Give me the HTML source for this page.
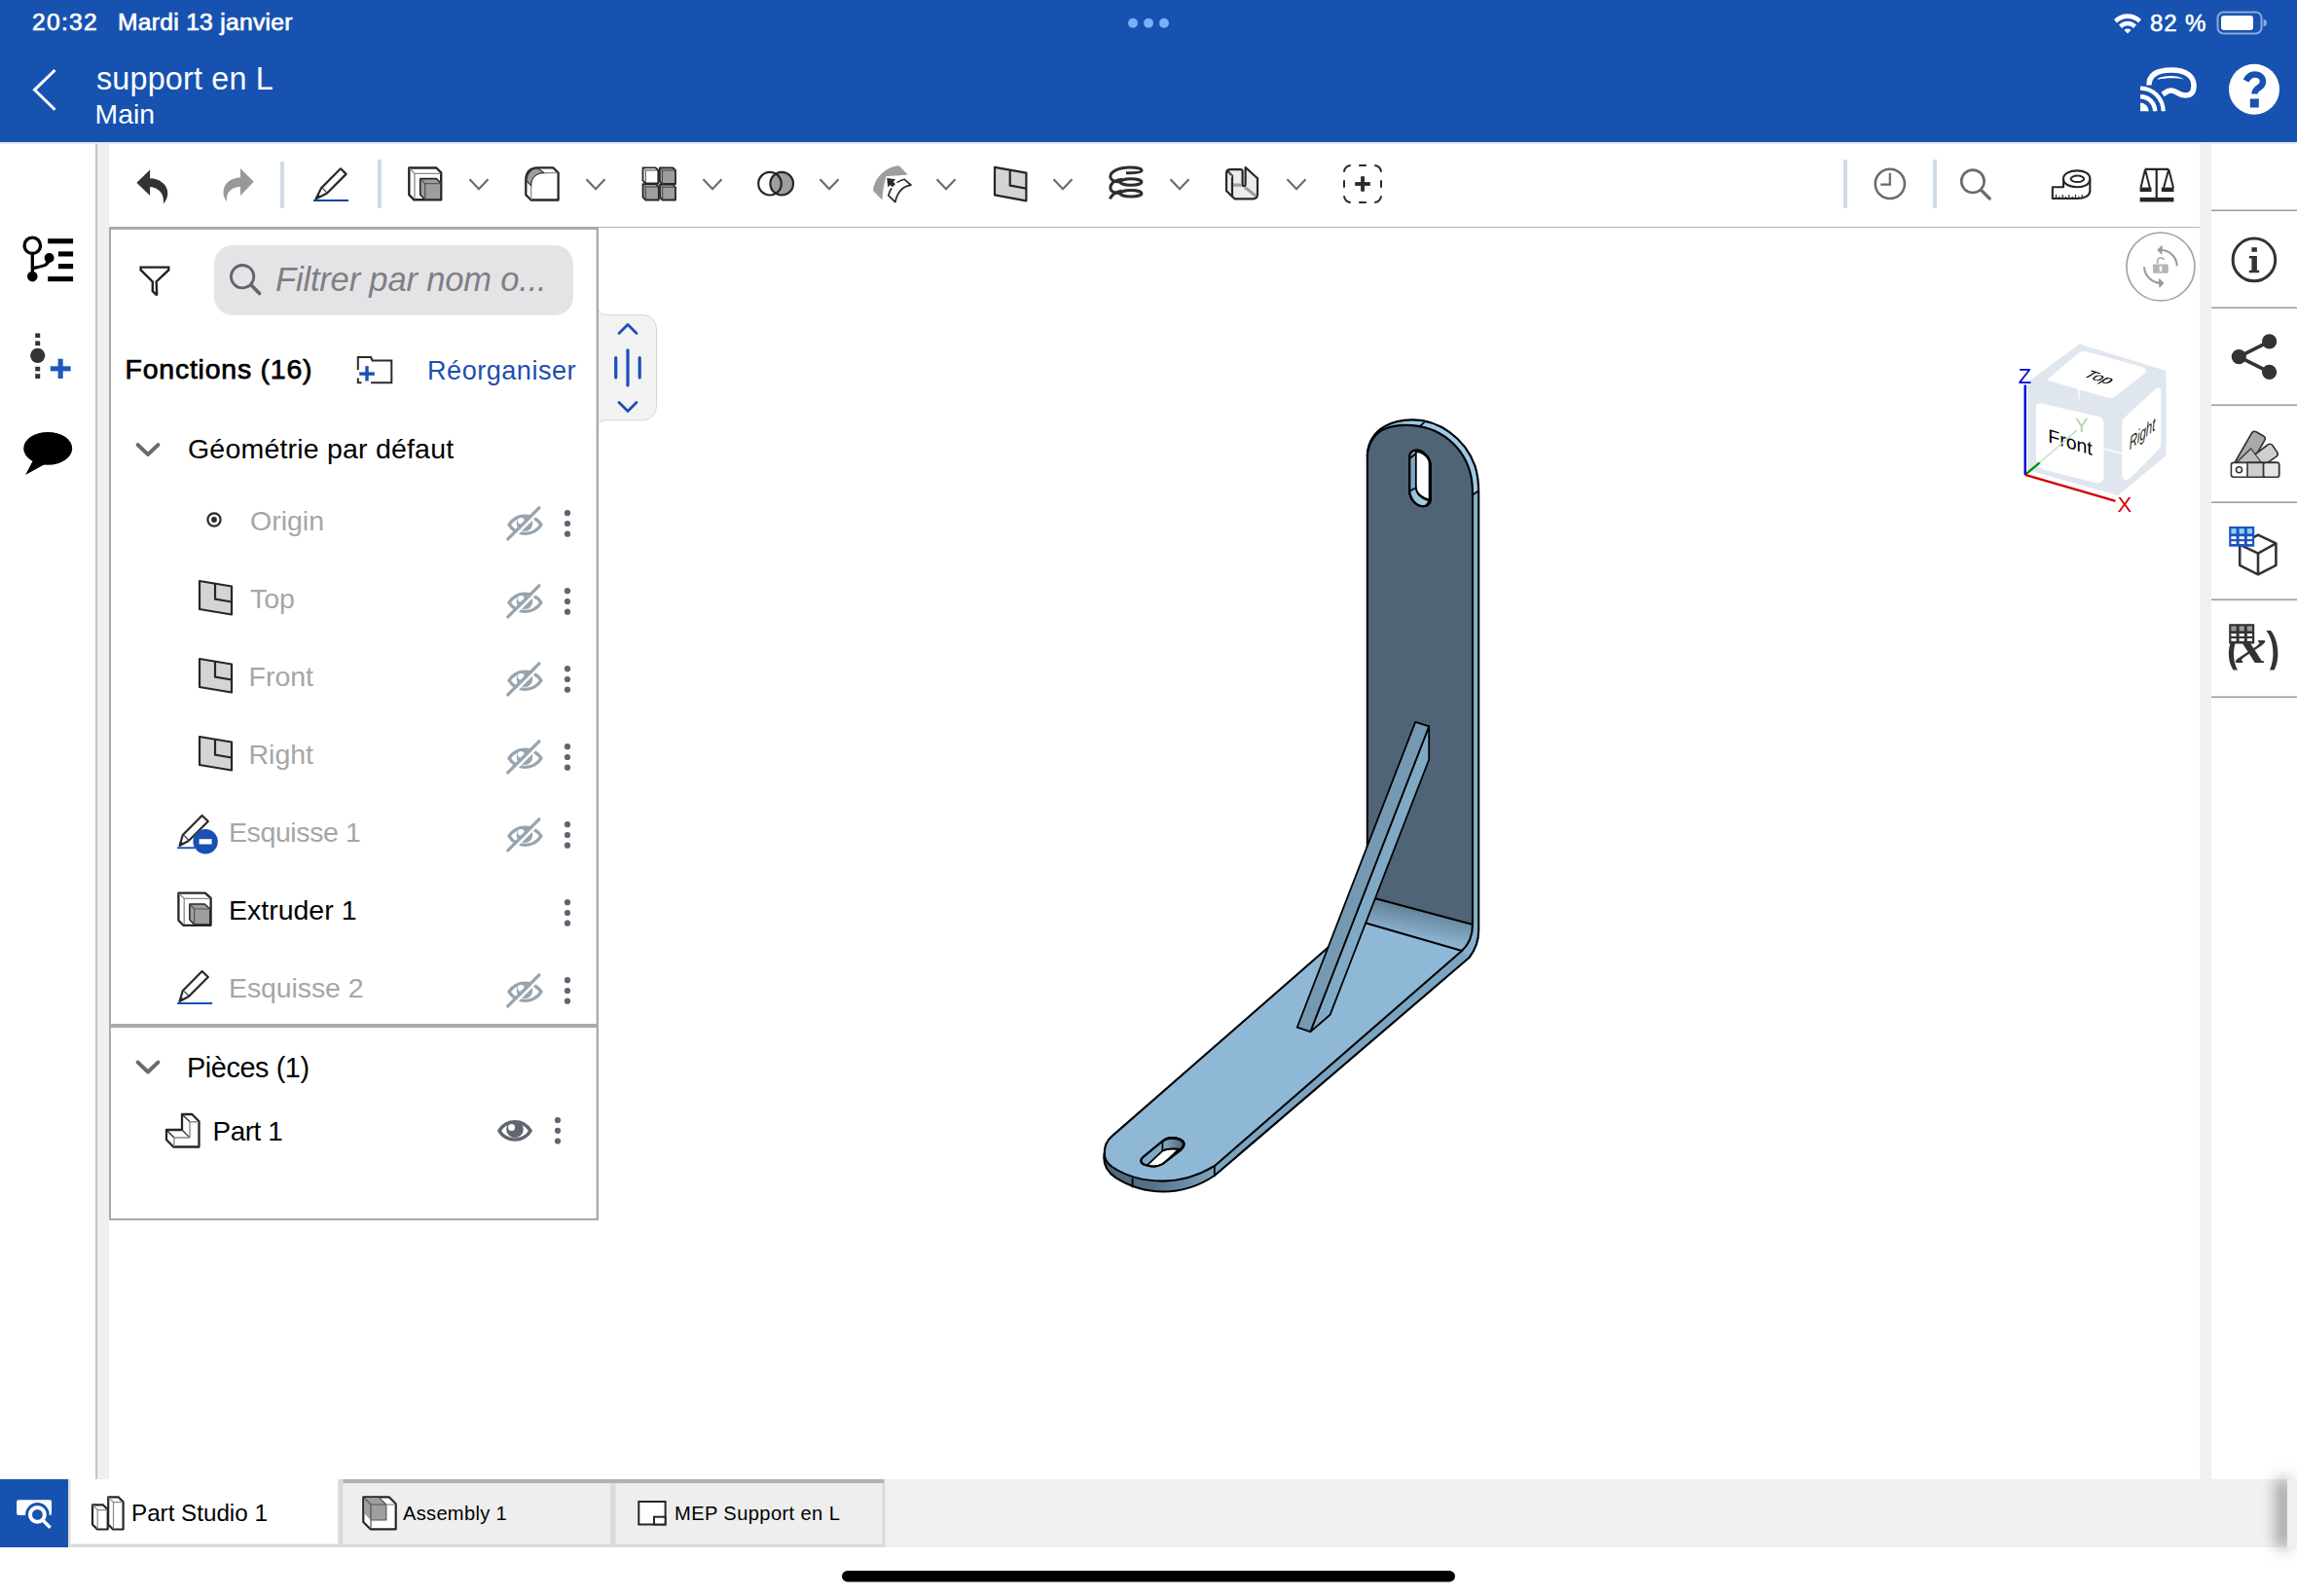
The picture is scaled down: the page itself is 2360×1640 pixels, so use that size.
<!DOCTYPE html>
<html><head><meta charset="utf-8">
<style>
*{margin:0;padding:0;box-sizing:border-box}
html,body{width:2360px;height:1640px;overflow:hidden;background:#fff;font-family:"Liberation Sans",sans-serif}
.a{position:absolute}
.t{position:absolute;white-space:nowrap;line-height:1}
svg.s{position:absolute;left:0;top:0;overflow:visible}
</style></head><body>
<!-- header -->
<div class="a" style="left:0;top:0;width:2360px;height:146px;background:#1752b0"></div>
<div class="a" style="left:0;top:146px;width:2360px;height:2px;background:#e4ebf4"></div>
<div class="t" style="left:33px;top:11.3px;font-size:24.6px;color:#fff;-webkit-text-stroke:0.7px #fff;letter-spacing:1.3px">20:32</div>
<div class="t" style="left:121px;top:11.3px;font-size:24.6px;color:#fff;-webkit-text-stroke:0.7px #fff;letter-spacing:0.3px">Mardi 13 janvier</div>
<div class="t" style="left:99px;top:65px;font-size:32.3px;color:#fff;letter-spacing:0.2px">support en L</div>
<div class="t" style="left:97.6px;top:102.8px;font-size:28.3px;color:#fff">Main</div>
<div class="t" style="left:2209px;top:12px;font-size:24px;color:#fff;-webkit-text-stroke:0.55px #fff;letter-spacing:0.9px">82 %</div>

<svg class="s" width="2360" height="150">
 <!-- dots -->
 <circle cx="1164" cy="23.8" r="5" fill="#7aaefc"/>
 <circle cx="1180" cy="23.8" r="5" fill="#7aaefc"/>
 <circle cx="1196" cy="23.8" r="5" fill="#7aaefc"/>
 <!-- back chevron -->
 <polyline points="56.5,72 35.5,92.3 56.5,112.8" fill="none" stroke="#fff" stroke-width="3"/>
 <!-- wifi -->
 <g fill="#fff" transform="translate(0,-1.5)">
  <path d="M2172,21.5 A20,20 0 0 1 2200,21.5 L2197,25 A15.5,15.5 0 0 0 2175,25 Z"/>
  <path d="M2177,27 A12.5,12.5 0 0 1 2195,27 L2192,30.5 A8,8 0 0 0 2180,30.5 Z"/>
  <path d="M2182.5,32.5 A5,5 0 0 1 2189.5,32.5 L2186,36 Z"/>
 </g>
 <!-- battery -->
 <rect x="2278.5" y="12.5" width="45" height="22" rx="6" fill="none" stroke="#8aa8dc" stroke-width="2"/>
 <rect x="2282" y="16" width="33" height="15" rx="3" fill="#fff"/>
 <path d="M2325.5,20 a3.5,3.5 0 0 1 0,7 Z" fill="#8aa8dc"/>
 <!-- cast/headset icon -->
 <g fill="#fff">
  <path d="M2199,105.6 A8.7,8.7 0 0 1 2207.7,114.3 L2199,114.3 Z"/>
  <path d="M2199,96.9 A17.4,17.4 0 0 1 2216.4,114.3 L2211.9,114.3 A12.9,12.9 0 0 0 2199,101.4 Z"/>
  <path d="M2199,88.5 A25.8,25.8 0 0 1 2224.8,114.3 L2220.6,114.3 A21.6,21.6 0 0 0 2199,92.7 Z"/>
 </g>
 <path d="M2208,87.5 C2208,76 2218,72 2231,72 C2247,72 2254,79 2254,88 C2254,96 2250,98 2245,98 C2238,98 2236,93 2231,93 C2227,93 2225,95 2222,97" fill="none" stroke="#fff" stroke-width="5.5"/>
 <path d="M2217,80.5 C2224,77 2238,77 2244,81.5 C2238,79.8 2224,79.8 2217,81.8 Z" fill="#fff"/>
 <!-- help -->
 <circle cx="2316" cy="91.7" r="26" fill="#fff"/>
 <path d="M2307.5,83 C2310,78.5 2313.5,76.5 2316.5,76.5 C2322,76.5 2325,80 2325,84 C2325,88 2321.5,89.5 2319.5,91 C2317.5,92.5 2316.5,94 2316.5,96.5" fill="none" stroke="#1752b0" stroke-width="6.5"/>
 <rect x="2311.8" y="101.5" width="9" height="9" fill="#1752b0"/>
</svg>


<!-- toolbar -->
<svg class="s" width="2360" height="240">
 <defs>
  <g id="chev"><polyline points="-9.5,-5 0,5 9.5,-5" fill="none" stroke="#6d6d70" stroke-width="2.3"/></g>
 </defs>
 <!-- undo -->
 <path d="M140.4,187.7 L154.1,174.6 L154.1,183.2 C164,183.5 172.3,189.5 172.3,198.5 C172.3,203 170.2,206.8 167.8,209.4 C169,203 166.5,193.5 154.1,192 L154.1,200.9 Z" fill="#333"/>
 <!-- redo -->
 <path d="M260.8,186.8 L247,173 L247,182.3 C237,182.8 229.5,189 229.5,197.5 C229.5,201.5 231,205 233,207.3 C232,200.5 235,192.5 247,191.7 L247,200.9 Z" fill="#999"/>
 <!-- separators -->
 <rect x="288" y="166" width="4" height="48" fill="#cfdbe6"/>
 <rect x="388" y="164" width="4" height="50" fill="#cfdbe6"/>
 <rect x="1894" y="164" width="4" height="50" fill="#cfdbe6"/>
 <rect x="1986" y="164" width="4" height="50" fill="#cfdbe6"/>
 <!-- pencil -->
 <path d="M350,173.3 L355.6,178.9 L335.8,198.7 L330.2,193.1 Z" fill="#fff" stroke="#2a2a2a" stroke-width="2.2" stroke-linejoin="round"/>
 <path d="M330.2,193.1 L324.6,204.3 L335.8,198.7" fill="#fff" stroke="#2a2a2a" stroke-width="2.2" stroke-linejoin="round"/>
 <path d="M324.6,204.3 L326.5,199 L329.8,202.4 Z" fill="#2a2a2a"/>
 <rect x="322" y="205" width="36" height="2" fill="#0b3fb0"/>
 <!-- extrude -->
 <path d="M420.3,172.5 L448.4,172.5 L453.2,177.3 L453.2,205.3 L425.4,205.3 L420.3,200.2 Z" fill="#fff" stroke="#262626" stroke-width="2.4" stroke-linejoin="round"/>
 <path d="M421,173.2 L426,178.3 M426,178.3 L452.5,178.3 M426,178.3 L426,204.5" fill="none" stroke="#8a8a8a" stroke-width="1.3"/>
 <path d="M431.7,183.6 L448.4,183.6 L453,188.2 L453,205 L436.7,205 L431.7,200 Z" fill="#9e9e9e" stroke="#262626" stroke-width="1.6" stroke-linejoin="round"/>
 <path d="M431.7,183.6 L436.7,188.6 L453,188.6 M436.7,188.6 L436.7,205" fill="none" stroke="#555" stroke-width="1.3"/>
 <use href="#chev" x="492" y="189.2"/>
 <!-- fillet -->
 <path d="M540.3,199.2 L540.3,185 C540.3,177 545,172.3 552,172.3 L568.3,172.3 L573.6,177.6 L573.6,205.5 L545.6,205.5 L540.3,200.2 Z" fill="#fff" stroke="#262626" stroke-width="2.3" stroke-linejoin="round"/>
 <path d="M541,186 C541,178 546,173 553,173 L559,177.6 C550,178 545.7,183.5 545.7,190.7 Z" fill="#9e9e9e" stroke="#333" stroke-width="1.2"/>
 <path d="M559.4,177.6 L573,177.6 M545.7,190.7 L545.7,205" fill="none" stroke="#8a8a8a" stroke-width="1.3"/>
 <use href="#chev" x="612" y="189.2"/>
 <!-- pattern -->
 <g stroke="#262626" stroke-width="1.8" stroke-linejoin="round">
  <path d="M660.5,172.3 L673.5,172.3 L676.3,175 L676.3,188.5 L663.3,188.5 L660.5,185.7 Z" fill="#fff"/>
  <path d="M677.8,172.3 L691.3,172.3 L694,175 L694,189 L680.5,189 L677.8,186.3 Z" fill="#9e9e9e"/>
  <path d="M660.5,189.2 L674,189.2 L676.8,192 L676.8,205.5 L663.3,205.5 L660.5,202.7 Z" fill="#9e9e9e"/>
  <path d="M678,189.5 L691.3,189.5 L694,192.3 L694,205.5 L680.7,205.5 L678,202.8 Z" fill="#9e9e9e"/>
 </g>
 <path d="M660.5,172.3 L663.3,175 L676.3,175 M663.3,175 L663.3,188.5 M677.8,172.3 L680.5,175 L694,175 M680.5,175 L680.5,189 M660.5,189.2 L663.3,192 L676.8,192 M663.3,192 L663.3,205.5 M678,189.5 L680.7,192.3 L694,192.3 M680.7,192.3 L680.7,205.5" fill="none" stroke="#444" stroke-width="1"/>
 <use href="#chev" x="732" y="189.2"/>
 <!-- boolean -->
 <circle cx="803.2" cy="188.7" r="11.8" fill="#9e9e9e" stroke="#262626" stroke-width="2.2"/>
 <circle cx="791" cy="188.7" r="11.8" fill="none" stroke="#262626" stroke-width="2.2"/>
 <use href="#chev" x="852" y="189.2"/>
 <!-- sweep -->
 <path d="M897,196 C898,183 910,171 923.7,170.2 L932.7,179.6 C925,180 917,181 910.4,181.2 C908,189 907,197 906.5,205.5 Z" fill="#9e9e9e"/>
 <path d="M911.2,183.1 L920.2,184.3 L912.3,192.4 Z" fill="#2a2a2a"/><path d="M915.5,187.8 L921.6,193.6" stroke="#2a2a2a" stroke-width="4.4"/>
 <path d="M921.5,187.6 C924,186 926.5,185 929.2,184.3 L936,190.2 C928,191.5 922,197 919.8,207.6 L912.8,200.8 C913.5,198 914.5,195.5 916,193.2" fill="#fff" stroke="#2a2a2a" stroke-width="1.7" stroke-linejoin="round"/>
 <use href="#chev" x="972" y="189.2"/>
 <!-- plane -->
 <path d="M1022,171.8 L1054.4,177.6 L1054.4,206.3 L1022,200.4 Z" fill="#d4d4d4" stroke="#262626" stroke-width="2.2" stroke-linejoin="round"/>
 <path d="M1037.7,174.6 L1037.7,190.6 L1054.2,193.6" fill="none" stroke="#262626" stroke-width="2.2"/>
 <use href="#chev" x="1092" y="189.2"/>
 <!-- helix -->
 <g fill="none" stroke="#2e2e2e" stroke-width="3">
  <path d="M1157,177.8 C1165,177.8 1173,177.4 1173,175.3 C1173,173 1167,172 1161,172 C1149,172 1140.8,176.5 1140.8,181.5 C1140.8,185 1145,186.8 1151,187"/>
  <ellipse cx="1162" cy="187" rx="11" ry="3.2"/>
  <path d="M1153,184.2 C1145.5,184.8 1140.8,188.5 1140.8,193 C1140.8,196.5 1145,198.5 1151,198.8"/>
  <ellipse cx="1162" cy="198.8" rx="11" ry="3.2"/>
  <path d="M1152.5,196 C1147,197 1142.5,200 1140.2,204.3"/>
 </g>
 <use href="#chev" x="1212" y="189.2"/>
 <!-- sheet metal -->
 <path d="M1260,178.2 C1260,175.5 1262,174.2 1264.5,174.2 L1274.5,174.2 C1276,174.2 1276.6,175 1276.6,176.2 L1276.6,189.3 C1276.6,190.5 1277.3,191.2 1278,191.2 C1278.8,191.2 1279.6,190.5 1279.6,189.3 L1279.6,172 L1292,183.2 L1292,199.8 C1292,202.5 1290,204.3 1287,204.3 L1268.8,204.3 L1266,202 L1260,196 Z" fill="#ececec" stroke="#262626" stroke-width="2.2" stroke-linejoin="round"/>
 <path d="M1261,175.5 L1266,180.8 L1266,202" fill="none" stroke="#262626" stroke-width="2.2"/>
 <path d="M1267,190.2 L1276,190.2 M1279,192.5 L1290.5,201.5" fill="none" stroke="#9e9e9e" stroke-width="3.2"/>
 <path d="M1261.5,176 L1266,180.5 L1266,183" fill="#9e9e9e"/>
 <use href="#chev" x="1332" y="189.2"/>
 <!-- dashed plus -->
 <path d="M1381,176.8 A6.8,6.8 0 0 1 1387.8,170 M1412.2,170 A6.8,6.8 0 0 1 1419,176.8 M1419,201.2 A6.8,6.8 0 0 1 1412.2,208 M1387.8,208 A6.8,6.8 0 0 1 1381,201.2 M1396.2,170 H1403.8 M1396.2,208 H1403.8 M1381,185.2 V192.8 M1419,185.2 V192.8" fill="none" stroke="#2a2a2a" stroke-width="2"/>
 <rect x="1392.2" y="187.1" width="15.6" height="3.8" fill="#2a2a2a"/>
 <rect x="1398.1" y="181.2" width="3.8" height="15.5" fill="#2a2a2a"/>
 <!-- clock -->
 <circle cx="1941.8" cy="188.9" r="15.1" fill="none" stroke="#69696e" stroke-width="2.5"/>
 <path d="M1941.8,177.8 L1941.8,189.7 L1932.2,189.7" fill="none" stroke="#69696e" stroke-width="2.2"/>
 <!-- search -->
 <circle cx="2026.9" cy="186.3" r="11.7" fill="none" stroke="#69696e" stroke-width="2.6"/>
 <path d="M2035.5,195.3 L2044.2,204" fill="none" stroke="#69696e" stroke-width="3.2" stroke-linecap="round"/>
 <!-- tape measure -->
 <path d="M2108.8,192.3 L2120,192.3 L2120,183.5 C2120,178.5 2126,175.4 2134.2,175.4 C2142,175.4 2147.3,178.5 2147.3,183.5 L2147.3,196 C2147.3,201 2142,204 2134.2,204 L2108.8,204 Z" fill="#fff" stroke="#262626" stroke-width="2.1" stroke-linejoin="round"/>
 <path d="M2120,184 C2120,189 2126,192.3 2134.2,192.3 C2142,192.3 2147.3,189 2147.3,184" fill="none" stroke="#262626" stroke-width="2.1"/>
 <ellipse cx="2134.4" cy="183.8" rx="6.8" ry="3.2" fill="none" stroke="#262626" stroke-width="2"/>
 <path d="M2112.5,204 v-4 M2115.8,204 v-2.2 M2119.2,204 v-4 M2122.5,204 v-2.2 M2125.8,204 v-4 M2129.2,204 v-2.2 M2132.5,204 v-4 M2135.8,204 v-2.2 M2139.2,204 v-4" stroke="#262626" stroke-width="1.2"/>
 <!-- scale -->
 <path d="M2203.8,173.8 L2228.2,173.8 M2215.7,173.8 L2215.7,204" fill="none" stroke="#262626" stroke-width="2.2"/>
 <path d="M2204,174 L2199.5,193 M2204,174 L2208.8,193 M2228.2,174 L2223,193 M2228.2,174 L2233,193" fill="none" stroke="#262626" stroke-width="2"/>
 <rect x="2198.6" y="192.6" width="11.9" height="4.5" fill="#262626"/>
 <rect x="2220.8" y="192.6" width="12.6" height="4.5" fill="#262626"/>
 <rect x="2198.6" y="202.9" width="34.8" height="4.5" fill="#262626"/>
</svg>


<!-- 3D model -->
<svg class="s" width="2360" height="1640">
 <defs>
  <linearGradient id="bend" x1="0.7" y1="0" x2="0.38" y2="0.92">
   <stop offset="0" stop-color="#4f6577"/><stop offset="0.45" stop-color="#7092aa"/><stop offset="0.85" stop-color="#8db6d4"/><stop offset="1" stop-color="#8fb8d6"/>
  </linearGradient>
  <linearGradient id="endside" x1="1133" y1="0" x2="1250" y2="0" gradientUnits="userSpaceOnUse">
   <stop offset="0" stop-color="#4f6577"/><stop offset="0.45" stop-color="#58728a"/><stop offset="1" stop-color="#7ea6c3"/>
  </linearGradient>
  <linearGradient id="slotback" x1="1193" y1="0" x2="1216" y2="0" gradientUnits="userSpaceOnUse">
   <stop offset="0" stop-color="#8ab3d0"/><stop offset="1" stop-color="#4f6577"/>
  </linearGradient>
  <linearGradient id="slotwall" x1="0" y1="0" x2="1" y2="1">
   <stop offset="0" stop-color="#8fbad8"/><stop offset="1" stop-color="#a5d2f0"/>
  </linearGradient>
 </defs>
 <!-- fills -->
 <path d="M1502,977 L1509.5,984 L1247.8,1208 L1247.8,1198.2 Z" fill="#7aa5c2" stroke="#7aa5c2" stroke-width="1.5"/>
 <path d="M1134.7,1185.4 C1133,1195 1136,1203 1146.3,1210.2 C1160,1219 1177,1224.5 1195.2,1224.5 C1215,1224.5 1233,1218 1247.8,1208 L1247.8,1198.2 C1233,1207 1215,1213.6 1195.2,1213.6 C1175,1213.6 1156,1208 1142.6,1199 C1137,1195 1134.7,1190 1134.7,1185.4 Z" fill="url(#endside)"/>
 <path d="M1403.2,948.5 L1502,977 L1247.8,1198.2 C1233,1207 1215,1213.6 1195.2,1213.6 C1175,1213.6 1156,1208 1142.6,1199 C1137,1195 1134.7,1190 1134.7,1185.4 C1134.7,1178 1137,1172 1142.6,1167.4 L1364.9,973.3 Z" fill="#8fb8d6"/>
 <path d="M1404.8,921 L1404.8,468.2 C1405,455 1412,444 1423,438 C1431,433.5 1440,431.4 1450.6,431.4 C1478,431 1505,450 1515.4,478.6 C1518.5,488 1519.2,497 1519.2,506 L1519.2,956 C1519.2,968 1515,977 1509.5,984 L1502,977 Z" fill="#84b0cd"/>
 <path d="M1440,433 C1444,432 1447,431.4 1450.6,431.4 C1478,431 1505,450 1515.4,478.6 C1518.5,488 1519.2,497 1519.2,506 L1513,508 C1513,470 1485,438 1445,437 Z" fill="#9ccae8"/>
 <path d="M1404.8,921.1 L1404.8,468.2 C1405,455 1415,443 1423.1,440.7 C1430,437.5 1438,436.9 1445.1,436.9 C1480,437 1505,460 1511.3,488.9 C1512.6,495 1513,502 1513,508.2 L1513,950 Z" fill="#4f6577"/>
 <path d="M1404.8,921.1 L1513,950 C1513,962 1508.5,971 1502,977 L1403.2,948.5 Z" fill="url(#bend)"/>
 <g stroke="#000" stroke-width="2.1" stroke-linejoin="round" stroke-linecap="round" fill="none">
  <!-- outer silhouette -->
  <path d="M1404.8,921 L1404.8,468.2 C1405,455 1412,444 1423,438 C1431,433.5 1440,431.4 1450.6,431.4 C1478,431 1505,450 1515.4,478.6 C1518.5,488 1519.2,497 1519.2,506 L1519.2,956 C1519.2,968 1515,977 1509.5,984 L1247.8,1208 C1233,1218 1215,1224.5 1195.2,1224.5 C1177,1224.5 1160,1219 1146.3,1210.2 C1136,1203 1133,1195 1134.7,1185.4 C1134.7,1178 1137,1172 1142.6,1167.4 L1370,968.8"/>
  <!-- dark face outline & bend lines -->
  <path d="M1404.8,468.2 C1405,455 1415,443 1423.1,440.7 C1430,437.5 1438,436.9 1445.1,436.9 C1480,437 1505,460 1511.3,488.9 C1512.6,495 1513,502 1513,508.2 L1513,950 C1513,962 1508.5,971 1502,977"/>
  <path d="M1404.8,921.1 L1513,950 M1403.2,948.5 L1502,977 L1247.8,1198.2 C1233,1207 1215,1213.6 1195.2,1213.6 C1175,1213.6 1156,1208 1142.6,1199 C1137,1195 1134.7,1190 1134.7,1185.4"/>
  <path d="M1459,437.6 L1463,434.4 M1513.5,508.2 L1518.8,504.6 M1163.6,1211.5 L1163.6,1219.5 M1247.8,1198.2 L1247.8,1208" stroke-width="1.8"/>
 </g>
 <g stroke="#000" stroke-width="2" stroke-linejoin="round">
  <!-- slot vertical plate -->
  <path d="M1448.2,468.2 C1449,464 1452,462.4 1455.5,462.4 C1462,462.4 1469.9,470 1469.9,479 L1469.9,513 C1469.9,518 1466,520.3 1462.4,520.3 C1456,520.3 1448.2,514 1448.2,505 Z" fill="#7fa9c6"/>
  <path d="M1454.8,464.1 C1462,464.5 1468.6,470 1468.6,477 L1468.6,513.7 C1462,512 1454.8,507 1454.8,501.3 Z" fill="#fff" stroke-width="1.8"/>
  <path d="M1448.2,504.8 L1454.8,501.3 C1455.5,508 1461,512.5 1468.3,514.5 C1466.5,518.5 1464.5,520 1462.4,520.2 C1455,519.5 1449.5,513.5 1448.2,504.8 Z" fill="url(#slotwall)" stroke-width="1.8"/>
  <path d="M1448.2,468.2 C1449,464 1452,462.4 1455.5,462.4 C1462,462.4 1469.9,470 1469.9,479 L1469.9,513 C1469.9,518 1466,520.3 1462.4,520.3 C1456,520.3 1448.2,514 1448.2,505 Z" fill="none"/>
  <path d="M1448.5,471 L1454.8,466" fill="none" stroke-width="1.6"/>
  <!-- slot bottom plate -->
  <path d="M1174.1,1189.2 L1192.9,1173.8 C1196,1170.5 1200,1168.9 1204.2,1168.9 C1211,1168.9 1216.6,1172 1216.6,1175.6 C1216.6,1178 1215,1180 1213.2,1181.7 L1194.4,1196 C1191,1198 1188,1198.6 1185.4,1198.6 C1178,1198.6 1172.3,1196 1172.3,1192.9 C1172.3,1191.5 1173,1190.2 1174.1,1189.2 Z" fill="#7fa9c6"/>
  <path d="M1194.4,1173.3 C1197,1171 1200,1169.8 1204.2,1169.8 C1211,1169.8 1215.8,1172.5 1215.8,1175.8 C1215.8,1177.5 1214.5,1179.3 1213,1180.8 C1211,1180.5 1208,1180.4 1205,1180.5 C1200,1180.7 1196.5,1181.5 1194.4,1182.6 Z" fill="url(#slotback)" stroke-width="1.8"/>
  <path d="M1178.6,1197.4 L1194.4,1182.6 C1198,1181 1205,1180.3 1210.8,1181.2 L1195.2,1195.8 C1190,1198.5 1183,1199 1178.6,1197.4 Z" fill="#fff" stroke-width="1.8"/>
  <path d="M1174.1,1189.2 L1192.9,1173.8 C1196,1170.5 1200,1168.9 1204.2,1168.9 C1211,1168.9 1216.6,1172 1216.6,1175.6 C1216.6,1178 1215,1180 1213.2,1181.7 L1194.4,1196 C1191,1198 1188,1198.6 1185.4,1198.6 C1178,1198.6 1172.3,1196 1172.3,1192.9 C1172.3,1191.5 1173,1190.2 1174.1,1189.2 Z" fill="none"/>
  <!-- rib -->
  <path d="M1468.2,746.3 L1468.2,780.5 L1366.6,1042.7 L1346.3,1060.2 Z" fill="#80a9c6" stroke-width="1.8"/>
  <path d="M1454.2,741.9 L1468.2,746.3 L1346.3,1060.2 L1332.7,1055.7 Z" fill="#7699b3" stroke-width="1.8"/>
 </g>
</svg>
<!-- right panel & viewcube -->
<svg class="s" width="2360" height="1640">
 <!-- right panel separators -->
 <rect x="2272" y="215.5" width="88" height="1.5" fill="#9a9a9a"/>
 <rect x="2272" y="315.5" width="88" height="1.5" fill="#9a9a9a"/>
 <rect x="2272" y="415.5" width="88" height="1.5" fill="#9a9a9a"/>
 <rect x="2272" y="515.5" width="88" height="1.5" fill="#9a9a9a"/>
 <rect x="2272" y="615.5" width="88" height="1.5" fill="#9a9a9a"/>
 <rect x="2272" y="715.5" width="88" height="1.5" fill="#9a9a9a"/>
 <!-- info -->
 <circle cx="2315.9" cy="266.9" r="21.8" fill="none" stroke="#333" stroke-width="3"/>
 <rect x="2313.4" y="254.2" width="5.5" height="4.6" fill="#333"/>
 <path d="M2310.8,263 L2318.9,263 L2318.9,277.7 L2321.2,277.7 L2321.2,280.3 L2310.8,280.3 L2310.8,277.7 L2313.4,277.7 L2313.4,265.6 L2310.8,265.6 Z" fill="#333"/>
 <!-- share -->
 <path d="M2300.3,366.6 L2331.6,350.9 M2300.3,366.6 L2331.6,382.3" stroke="#333" stroke-width="3.6"/>
 <circle cx="2300.3" cy="366.6" r="7.6" fill="#333"/>
 <circle cx="2331.6" cy="350.9" r="7.6" fill="#333"/>
 <circle cx="2331.6" cy="382.3" r="7.6" fill="#333"/>
 <!-- appearance -->
 <g stroke="#333" stroke-width="1.6" stroke-linejoin="round">
  <path d="M2296.5,474.5 L2313.5,445 C2314.5,443.3 2316.3,442.8 2318,443.8 L2325.5,448 C2327.2,449 2327.7,450.8 2326.7,452.5 L2312,478 Z" fill="#a9a9a9"/>
  <path d="M2305,476 L2330,457 C2331.5,455.8 2333.5,456 2334.7,457.5 L2339.5,464.5 C2340.6,466 2340.3,468 2338.8,469.2 L2322,481 Z" fill="#cfcfcf"/>
  <path d="M2298,475 L2312.7,461 L2321,472 L2325,477 Z" fill="#bdbdbd" stroke-width="1.2"/>
  <rect x="2292.4" y="475.4" width="49.2" height="14.8" rx="2.5" fill="#fff"/>
  <rect x="2309" y="475.4" width="16.6" height="14.8" fill="#cfcfcf"/>
  <rect x="2325.6" y="475.4" width="16" height="14.8" rx="2" fill="#e6e6e6"/>
  <circle cx="2300.5" cy="482.8" r="3" fill="none"/>
 </g>
 <!-- variable studio -->
 <path d="M2320,549.6 L2338.4,558.4 L2338.4,580.8 L2320,590.3 L2301.2,580.8 L2301.2,559.6 Z M2301.2,559.6 L2320,568.6 L2338.4,558.4 M2320,568.6 L2320,590" fill="#fff" stroke="#333" stroke-width="2.6" stroke-linejoin="round"/>
 <rect x="2290.2" y="541" width="26" height="20.7" fill="#1b55c0"/>
 <g fill="#8fd0f4"><rect x="2292.4" y="543.2" width="5.2" height="5.2"/><rect x="2300.6" y="543.2" width="5.2" height="5.2"/><rect x="2308.8" y="543.2" width="5.2" height="5.2"/></g>
 <g fill="#fff"><rect x="2292.4" y="551.2" width="5.2" height="2.8"/><rect x="2300.6" y="551.2" width="5.2" height="2.8"/><rect x="2308.8" y="551.2" width="5.2" height="2.8"/><rect x="2292.4" y="556.2" width="5.2" height="2.8"/><rect x="2300.6" y="556.2" width="5.2" height="2.8"/><rect x="2308.8" y="556.2" width="5.2" height="2.8"/></g>
 <!-- fx -->
 <path d="M2291.5,661 C2288.5,670 2289.5,681 2294.5,688.5 L2299,688.5 C2294.5,680 2294,670 2296.5,661 Z" fill="#333"/>
 <path d="M2333,648 C2341,657 2343,678 2336.5,688.5 L2332,688.5 C2337.5,677 2336.5,658 2328.5,648 Z" fill="#333"/>
 <text x="2297.5" y="681" font-family="Liberation Serif" font-style="italic" font-weight="bold" font-size="50" fill="#333" transform="translate(2297.5,681) scale(1.25,1) translate(-2297.5,-681)">x</text>
 <rect x="2290.2" y="641.2" width="26" height="20.3" fill="#333"/>
 <g fill="#9a9a9a"><rect x="2292.4" y="643.4" width="5.2" height="5"/><rect x="2300.6" y="643.4" width="5.2" height="5"/><rect x="2308.8" y="643.4" width="5.2" height="5"/></g>
 <g fill="#fff"><rect x="2292.4" y="651" width="5.2" height="2.8"/><rect x="2300.6" y="651" width="5.2" height="2.8"/><rect x="2308.8" y="651" width="5.2" height="2.8"/><rect x="2292.4" y="656" width="5.2" height="2.8"/><rect x="2300.6" y="656" width="5.2" height="2.8"/><rect x="2308.8" y="656" width="5.2" height="2.8"/></g>

 <!-- rotation lock -->
 <circle cx="2219.9" cy="274" r="35" fill="#fff" stroke="#a3a3a3" stroke-width="1.7"/>
 <path d="M2236.8,273.4 C2236.5,264 2229,257 2219.5,256.8" fill="none" stroke="#999" stroke-width="2.1"/>
 <path d="M2216.8,256.8 L2221.2,252.6 L2220.8,261.2 Z" fill="#999" stroke="#999" stroke-width="1" stroke-linejoin="round"/>
 <path d="M2203,274.3 C2203.3,283.5 2211,290.5 2220.5,291" fill="none" stroke="#999" stroke-width="2.1"/>
 <path d="M2222.8,290.9 L2218.6,286.6 L2218.8,295.2 Z" fill="#999" stroke="#999" stroke-width="1" stroke-linejoin="round"/>
 <rect x="2212" y="271.5" width="15.8" height="9.3" rx="1" fill="#b5b5b5"/>
 <path d="M2216.7,271 L2216.7,268.5 C2216.7,266 2218,264.8 2220,264.8 C2221.8,264.8 2223,265.7 2223.5,267.2" fill="none" stroke="#b5b5b5" stroke-width="1.8"/>
 <circle cx="2219.9" cy="275" r="1.7" fill="#fff"/><path d="M2219.1,275.5 L2220.7,275.5 L2221.2,279 L2218.6,279 Z" fill="#fff"/>

 <!-- view cube -->
 <path d="M2083,393 L2136.5,353.5 L2225.5,381 L2225.5,468 L2176,509 L2083,483 Z" fill="#dfe6ee"/>
 <path d="M2104.5,389 L2134,364 C2137,361 2140,360 2143,361 L2201,377 C2205,378.5 2206,381 2203,384 L2175,406 C2172,408.5 2169,409.5 2165,408.5 L2109,392.5 C2105,391.5 2103,390.5 2104.5,389 Z" fill="#fff"/>
 <path d="M2092,419 C2092,415 2094,413.8 2098,414.8 L2155,427.7 C2159.5,429 2161.5,431.5 2161.5,436 L2161.5,490.4 C2161.5,494.5 2157,497 2152.7,496 L2101.4,482.9 C2096,481.5 2092,478 2092,471.6 Z" fill="#fff"/>
 <path d="M2180.3,437 C2180.3,432 2182,429.5 2185,427 L2214,400 C2218,397 2220.4,398.5 2220.4,403 L2220.4,455 C2220.4,459 2219,461 2216,464 L2189,491 C2184,495 2180.3,493 2180.3,488 Z" fill="#fff"/>
 <path d="M2136,398 L2136,410 M2161.5,461 L2180.3,466" stroke="#fff" stroke-width="1.3"/>
 <text x="0" y="0" transform="translate(2127,461) skewY(16.5)" font-family="Liberation Sans" font-size="19.5" text-anchor="middle" fill="#000">Front</text>
 <text x="0" y="0" transform="translate(2153,391) rotate(18) skewX(-30) scale(1,0.75)" font-family="Liberation Sans" font-style="italic" font-size="17" text-anchor="middle" fill="#000">Top</text>
 <text x="0" y="0" transform="translate(2201,452) skewY(-38) scale(0.6,1)" font-family="Liberation Sans" font-style="italic" font-size="19" text-anchor="middle" fill="#222">Right</text>
 <path d="M2080.7,487.9 L2095.7,475.3" stroke="#009000" stroke-width="2.4"/>
 <path d="M2095.7,475.3 L2133.9,442.1" stroke="#bfe3bf" stroke-width="1.5"/>
 <path d="M2080.7,488 L2080.7,395.5" stroke="#0000d0" stroke-width="2.4"/>
 <path d="M2080.7,487.9 L2173.4,514.8" stroke="#d00000" stroke-width="2.4"/>
 <text x="2073.5" y="394" font-family="Liberation Sans" font-size="22" fill="#0000d0">Z</text>
 <text x="2175.5" y="525.5" font-family="Liberation Sans" font-size="22" fill="#d00000">X</text>
 <text x="2132" y="444" font-family="Liberation Sans" font-size="20" fill="#a8d8a8">Y</text>
</svg>

<!-- left gutter -->
<div class="a" style="left:98px;top:148px;width:2px;height:1372px;background:#c4c4c4"></div>
<div class="a" style="left:100px;top:148px;width:12px;height:1372px;background:#f0f0f0"></div>
<!-- right gutter -->
<div class="a" style="left:2260px;top:148px;width:12px;height:1372px;background:#f0f0f0"></div>

<!-- toolbar bottom border -->
<div class="a" style="left:112px;top:233px;width:2148px;height:1px;background:#b4b4b4"></div>

<!-- feature panel -->
<div class="a" style="left:112px;top:233px;width:503px;height:1021px;border:2px solid #a9a9a9;border-top-width:3px;background:#fff"></div>
<div class="a" style="left:112px;top:1052px;width:503px;height:4px;background:#a9a9a9"></div>
<div class="a" style="left:220px;top:252px;width:369px;height:72px;border-radius:19px;background:#e4e4e7"></div>
<div class="t" style="left:283px;top:270.2px;font-size:34.6px;letter-spacing:-0.2px;color:#7f7f83;font-style:italic">Filtrer par nom o...</div>
<div class="t" style="left:128.6px;top:365.3px;font-size:28.4px;color:#000;-webkit-text-stroke:0.75px #000;letter-spacing:0.8px">Fonctions (16)</div>
<div class="t" style="left:439px;top:366.5px;font-size:27.1px;color:#1c4fae;letter-spacing:0.5px">Réorganiser</div>
<div class="t" style="left:193px;top:447.4px;font-size:28.5px;letter-spacing:0.2px;color:#000">Géométrie par défaut</div>
<div class="t" style="left:257px;top:520.8px;font-size:28.5px;color:#a6a6a6">Origin</div>
<div class="t" style="left:257px;top:600.8px;font-size:28.5px;color:#a6a6a6">Top</div>
<div class="t" style="left:255.5px;top:680.8px;font-size:28.5px;color:#a6a6a6">Front</div>
<div class="t" style="left:255.5px;top:760.8px;font-size:28.5px;color:#a6a6a6">Right</div>
<div class="t" style="left:235px;top:840.8px;font-size:28.5px;color:#a6a6a6;letter-spacing:-0.4px">Esquisse 1</div>
<div class="t" style="left:235px;top:920.8px;font-size:28.5px;color:#000">Extruder 1</div>
<div class="t" style="left:235px;top:1000.8px;font-size:28.5px;color:#a6a6a6;letter-spacing:-0.1px">Esquisse 2</div>
<div class="t" style="left:192px;top:1083.4px;font-size:28.8px;letter-spacing:-0.4px;color:#000">Pièces (1)</div>
<div class="t" style="left:218.5px;top:1149.1px;font-size:27.8px;letter-spacing:-0.4px;color:#000">Part 1</div>

<svg class="s" width="2360" height="1640">
 <defs>
  <g id="eyeoff">
   <path d="M-16,1.2 C-12,-5 -6.5,-7.8 0.5,-7.8 C7.5,-7.8 13,-5 17,1.2 C13,7.5 7.5,10.4 0.5,10.4 C-6.5,10.4 -12,7.5 -16,1.2 Z" fill="none" stroke="#97a4af" stroke-width="3.4" stroke-linejoin="round"/>
   <circle cx="0" cy="-0.2" r="8.3" fill="#97a4af"/>
   <circle cx="-3.7" cy="-2.7" r="3.4" fill="#fff"/>
   <path d="M-15.15,17.95 L16.95,-14.15" stroke="#fff" stroke-width="2.8"/>
   <path d="M-17.2,15.9 L14.9,-16.2" stroke="#97a4af" stroke-width="3.3" stroke-linecap="round"/>
  </g>
  <g id="dots" fill="#5f6670"><circle cx="0" cy="-10.8" r="3.1"/><circle cx="0" cy="0" r="3.1"/><circle cx="0" cy="10.7" r="3.1"/></g>
  <g id="plane"><path d="M0,0 L33,5.5 L33,34.5 L0,29 Z" fill="#d4d4d4" stroke="#262626" stroke-width="2.2" stroke-linejoin="round"/><path d="M16,2.8 L16,18.5 L33,21.5" fill="none" stroke="#262626" stroke-width="2.2"/></g>
  <g id="pencil">
   <path d="M25.5,0.5 L31.7,6.5 L11.7,26.5 L5.7,20.5 Z" fill="#fff" stroke="#2a2a2a" stroke-width="2.2" stroke-linejoin="round"/>
   <path d="M5.7,20.5 L2.4,31.5 L11.7,26.5" fill="#fff" stroke="#2a2a2a" stroke-width="2.2" stroke-linejoin="round"/>
   <path d="M2.4,31.5 L4,26.8 L7,29.8 Z" fill="#2a2a2a"/>
  </g>
 </defs>
 <!-- left column icons -->
 <circle cx="33.3" cy="252.3" r="8.2" fill="none" stroke="#000" stroke-width="3.3"/>
 <path d="M33.3,260 L33.3,284" stroke="#000" stroke-width="3.3"/>
 <circle cx="33.3" cy="284.1" r="5.3" fill="#000"/>
 <path d="M33.3,275.5 C38,274.5 44,274 47,272 C49.5,270 50.6,267.5 50.6,265" fill="none" stroke="#000" stroke-width="3.3"/>
 <circle cx="50.6" cy="265" r="5" fill="#000"/>
 <rect x="49.2" y="245.2" width="25.9" height="5.1" fill="#000"/>
 <rect x="59.9" y="258.4" width="15.2" height="5.1" fill="#000"/>
 <rect x="59.9" y="271.1" width="15.2" height="5.1" fill="#000"/>
 <rect x="49.2" y="284.1" width="25.9" height="5.1" fill="#000"/>

 <g fill="#333"><rect x="36.2" y="342.5" width="5" height="4.6"/><rect x="36.2" y="350.4" width="5" height="4.8"/><rect x="36.2" y="376.8" width="5" height="4.6"/><rect x="36.2" y="384.2" width="5" height="4.8"/></g>
 <circle cx="38.7" cy="365.3" r="7.6" fill="#333"/>
 <rect x="51.8" y="376.3" width="20.8" height="5.1" fill="#1f56bf"/>
 <rect x="59.6" y="368.7" width="5.1" height="20.3" fill="#1f56bf"/>

 <ellipse cx="49.2" cy="460.8" rx="25" ry="16.9" fill="#000"/>
 <path d="M34.5,472 L26.1,487.9 L47,476.5 Z" fill="#000"/>

 <!-- panel icons -->
 <path d="M144.6,274.6 L173.3,274.6 L173.3,277.4 L160.6,289.4 L161.2,303.4 L156.8,299.2 L156.8,289.4 L144.6,277.4 Z" fill="none" stroke="#222" stroke-width="2.4" stroke-linejoin="miter" stroke-miterlimit="2.5"/>
 <circle cx="249.1" cy="284.2" r="11.7" fill="none" stroke="#636369" stroke-width="2.8"/>
 <path d="M258.2,293 L266.5,301.5" stroke="#636369" stroke-width="3.6" stroke-linecap="round"/>
 <!-- folder+ -->
 <path d="M367.8,380 L367.8,367 L381,367 L382.6,370.5 L402.3,370.5 L402.3,393.2 L381,393.2 M367.8,388.5 L367.8,393.2 L371.5,393.2" fill="none" stroke="#2a2a2a" stroke-width="2"/>
 <rect x="369.2" y="382.4" width="15.6" height="3.4" fill="#1c4fae"/>
 <rect x="375.3" y="376.2" width="3.4" height="15.3" fill="#1c4fae"/>
 <!-- collapse tab -->
 <path d="M614,314 C614,320 617,323.7 624,323.7 L660,323.7 C669,323.7 674.5,330 674.5,339 L674.5,416 C674.5,425 669,431.7 660,431.7 L624,431.7 C617,431.7 614,435 614,441.4 Z" fill="#f2f2f2" stroke="#d6d6d6" stroke-width="1"/>
 <rect x="612.7" y="233" width="2.3" height="1021" fill="#a9a9a9"/>
 <polyline points="636,342.6 645,333.6 654,342.6" fill="none" stroke="#1a50b8" stroke-width="2.8" stroke-linecap="round" stroke-linejoin="round"/>
 <polyline points="636,413.5 645,422.6 654,413.5" fill="none" stroke="#1a50b8" stroke-width="2.8" stroke-linecap="round" stroke-linejoin="round"/>
 <path d="M645,359.8 V396 M632.7,367.6 V388 M657.2,367.6 V388" stroke="#1a50b8" stroke-width="3.2" stroke-linecap="round"/>
 <!-- chevrons -->
 <polyline points="141.5,457 152,467 162.5,457" fill="none" stroke="#6b6b6b" stroke-width="3.8" stroke-linecap="round" stroke-linejoin="round"/>
 <polyline points="141.5,1091.5 152,1101.5 162.5,1091.5" fill="none" stroke="#6b6b6b" stroke-width="3.8" stroke-linecap="round" stroke-linejoin="round"/>
 <!-- origin -->
 <circle cx="220" cy="534" r="6.6" fill="none" stroke="#2a2a2a" stroke-width="2.2"/>
 <circle cx="220" cy="534" r="2.9" fill="#2a2a2a"/>
 <use href="#plane" x="205" y="597"/>
 <use href="#plane" x="205" y="677"/>
 <use href="#plane" x="205" y="757"/>
 <!-- esquisse 1 -->
 <use href="#pencil" x="182.1" y="837.5"/>
 <rect x="182.1" y="870.3" width="18" height="1.9" fill="#1a4fb3"/>
 <circle cx="211.1" cy="864.8" r="12.7" fill="#1a4fb3"/>
 <rect x="204.6" y="862.2" width="13" height="5.3" fill="#fff"/>
 <!-- extruder -->
 <path d="M183.4,917.6 L210.8,917.6 L216.6,922.8 L216.6,950.8 L188.3,950.8 L183.4,945.8 Z" fill="#fff" stroke="#262626" stroke-width="2.3" stroke-linejoin="round"/>
 <path d="M184,918.3 L189.2,923.3 L216,923.3 M189.2,923.3 L189.2,950" fill="none" stroke="#8a8a8a" stroke-width="1.3"/>
 <path d="M194.8,929 L210.2,929 L215.8,934 L215.8,950 L199.6,950 L194.8,945 Z" fill="#9e9e9e" stroke="#262626" stroke-width="1.5" stroke-linejoin="round"/>
 <path d="M194.8,929 L199.6,934 L215.8,934 M199.6,934 L199.6,950" fill="none" stroke="#555" stroke-width="1.2"/>
 <!-- esquisse 2 -->
 <use href="#pencil" x="182.1" y="997.5"/>
 <rect x="182.1" y="1030" width="36" height="2" fill="#1a4fb3"/>
 <!-- eyes & dots -->
 <use href="#eyeoff" x="539" y="538"/>
 <use href="#eyeoff" x="539" y="618"/>
 <use href="#eyeoff" x="539" y="698"/>
 <use href="#eyeoff" x="539" y="778"/>
 <use href="#eyeoff" x="539" y="858"/>
 <use href="#eyeoff" x="539" y="1018"/>
 <use href="#dots" x="583" y="538"/>
 <use href="#dots" x="583" y="618"/>
 <use href="#dots" x="583" y="698"/>
 <use href="#dots" x="583" y="778"/>
 <use href="#dots" x="583" y="858"/>
 <use href="#dots" x="583" y="938"/>
 <use href="#dots" x="583" y="1018"/>
 <!-- part -->
 <path d="M171,1161 L187,1161 L187,1145 L197.3,1145 L204.5,1152.3 L204.5,1178.5 L178.2,1178.5 L171,1171.3 Z" fill="#fff" stroke="#262626" stroke-width="2.3" stroke-linejoin="round"/>
 <path d="M171.5,1161.5 L178.9,1169 M187.5,1161.5 L194.8,1168.8 M187.5,1145.5 L195,1152.8" fill="none" stroke="#262626" stroke-width="1.2"/>
 <path d="M178.9,1169 L194.8,1169 M178.9,1169 L178.9,1178 M195,1152.8 L204,1152.8 M195,1152.8 L195,1169" fill="none" stroke="#8a8a8a" stroke-width="1.4"/>
 <path d="M512.9,1162 C517,1155.5 522.5,1152.8 529,1152.8 C535.5,1152.8 541,1155.5 545.1,1162 C541,1168.5 535.5,1171.1 529,1171.1 C522.5,1171.1 517,1168.5 512.9,1162 Z" fill="none" stroke="#5f6670" stroke-width="3.4" stroke-linejoin="round"/>
 <circle cx="529" cy="1160.4" r="8.8" fill="#5f6670"/>
 <circle cx="525.6" cy="1158.4" r="3.5" fill="#fff"/>
 <use href="#dots" x="573" y="1161.8"/>

 <!-- bottom tabs -->
 <rect x="0" y="1520" width="2350" height="70" fill="#f0f0f0"/>
 <rect x="0" y="1520" width="70" height="70" fill="#1752b0"/>
 <rect x="70" y="1520" width="2.6" height="70" fill="#dcdcdc"/>
 <rect x="72.6" y="1520" width="275" height="67" fill="#fff"/>
 <rect x="72.6" y="1586.6" width="275" height="3.2" fill="#d9d9d9"/>
 <rect x="347.3" y="1520" width="5.2" height="70" fill="#dadada"/>
 <rect x="352.5" y="1520" width="556" height="4.3" fill="#b2b2b2"/>
 <rect x="352.5" y="1524.3" width="275" height="62.5" fill="#eeeeee"/>
 <rect x="627.2" y="1524.3" width="5.5" height="65.5" fill="#dadada"/>
 <rect x="632.7" y="1524.3" width="275.5" height="62.5" fill="#eeeeee"/>
 <rect x="906.5" y="1524.3" width="3" height="65.5" fill="#dadada"/>
 <rect x="352.5" y="1586.6" width="557" height="3.2" fill="#dadada"/>
 <!-- search btn icon -->
 <rect x="17.1" y="1541.2" width="35.9" height="15.9" rx="2" fill="#fff"/>
 <circle cx="38.4" cy="1556.4" r="12.3" fill="#1752b0"/>
 <circle cx="38.4" cy="1556.4" r="7.4" fill="none" stroke="#fff" stroke-width="4"/>
 <path d="M44.6,1562.8 L51.6,1569.8" stroke="#fff" stroke-width="3.5"/>
 <!-- part studio icon -->
 <path d="M95,1546.3 L105.8,1546.3 L110.7,1551.2 L110.7,1571.5 L100,1571.5 L95,1566.5 Z" fill="#fff" stroke="#262626" stroke-width="2.2" stroke-linejoin="round"/>
 <path d="M95.4,1546.7 L100.2,1551.6 L110.5,1551.6 M100.2,1551.6 L100.2,1571" fill="none" stroke="#8a8a8a" stroke-width="1.2"/>
 <path d="M111.2,1538.4 L121.8,1538.4 L126.6,1543.3 L126.6,1571.5 L116,1571.5 L111.2,1566.5 Z" fill="#fff" stroke="#262626" stroke-width="2.2" stroke-linejoin="round"/>
 <path d="M111.6,1538.8 L116.5,1543.7 L126.2,1543.7 M116.5,1543.7 L116.5,1571" fill="none" stroke="#8a8a8a" stroke-width="1.2"/>
 <!-- assembly icon -->
 <path d="M373.3,1538.3 L399.7,1538.3 L406.7,1545.3 L406.7,1571.3 L380.6,1571.3 L373.3,1564 Z" fill="#fff" stroke="#262626" stroke-width="2.2" stroke-linejoin="round"/>
 <path d="M374,1539 L389.5,1539 L396.8,1546 L396.8,1562 L380.8,1562 L374,1555 Z" fill="#9e9e9e"/>
 <path d="M374,1539 L381,1546 L396.8,1546 M381,1546 L381,1562 L396.8,1562 L396.8,1546 M389.5,1539 L396.8,1546 M381,1562 L381,1571" fill="none" stroke="#555" stroke-width="1.2"/>
 <path d="M396.8,1546 L406.5,1546" stroke="#8a8a8a" stroke-width="1.2"/>
 <!-- MEP icon -->
 <rect x="656.3" y="1543" width="27.3" height="23.5" fill="#fff" stroke="#262626" stroke-width="2"/>
 <rect x="672" y="1558.7" width="11.6" height="7.8" fill="#fff" stroke="#262626" stroke-width="2"/>
 <!-- home indicator -->
 <rect x="865" y="1614" width="630" height="11.5" rx="5.75" fill="#000"/>
</svg>
<div class="t" style="left:135px;top:1543.3px;font-size:24.2px;color:#000">Part Studio 1</div>
<div class="t" style="left:414px;top:1545px;font-size:20.1px;letter-spacing:0.3px;color:#000">Assembly 1</div>
<div class="t" style="left:693px;top:1545.3px;font-size:20.1px;letter-spacing:0.4px;color:#000">MEP Support en L</div>
<div class="a" style="left:2350px;top:1520px;width:10px;height:70px;background:#f0f0f0;box-shadow:-9px 0 16px rgba(0,0,0,0.5)"></div>
</body></html>
